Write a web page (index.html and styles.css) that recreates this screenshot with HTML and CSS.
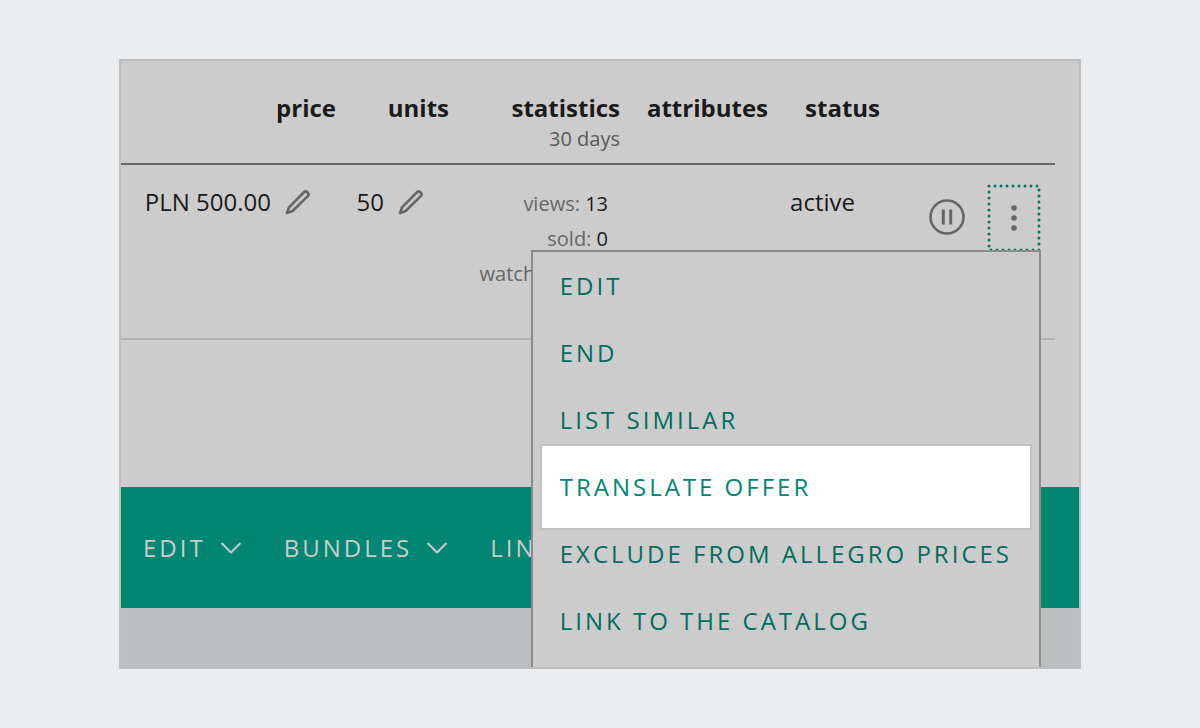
FILE: index.html
```
<!DOCTYPE html>
<html lang="en">
<head>
    <meta charset="UTF-8">
    <meta name="viewport" content="width=device-width, initial-scale=1.0">
    <title>My offers</title>
    <link rel="stylesheet" href="styles.css">
</head>
<body>
    <main class="panel">
        <table class="offers">
            <thead>
                <tr>
                    <th class="col-price">price</th>
                    <th class="col-units">units</th>
                    <th class="col-stats">statistics<small>30 days</small></th>
                    <th class="col-attributes">attributes</th>
                    <th class="col-status">status</th>
                    <th></th>
                </tr>
            </thead>
            <tbody>
                <tr>
                    <td>
                        <div class="value">
                            PLN 500.00
                            <button class="btn-icon" aria-label="Edit price">
                                <svg width="26" height="26" viewBox="0 0 26 26"><path d="M2 24 4 18.4 19.2 3Q20.6 1.6 22 3L23 4Q24.4 5.4 23 6.8L7.6 22Z"/></svg>
                            </button>
                        </div>
                    </td>
                    <td>
                        <div class="value">
                            50
                            <button class="btn-icon" aria-label="Edit units">
                                <svg width="26" height="26" viewBox="0 0 26 26"><path d="M2 24 4 18.4 19.2 3Q20.6 1.6 22 3L23 4Q24.4 5.4 23 6.8L7.6 22Z"/></svg>
                            </button>
                        </div>
                    </td>
                    <td>
                        <ul class="stats">
                            <li>views: <b>13</b></li>
                            <li>sold: <b>0</b></li>
                            <li>watched by: <b>0</b></li>
                        </ul>
                    </td>
                    <td></td>
                    <td><div class="value">active</div></td>
                    <td>
                        <div class="actions">
                            <button class="btn-icon" aria-label="Pause offer">
                                <svg width="36" height="36" viewBox="0 0 36 36"><circle cx="18" cy="18" r="16.5"/><path class="bars" d="M14.3 10.5v15M21.7 10.5v15"/></svg>
                            </button>
                            <div class="more">
                                <button class="btn-more" aria-label="More actions" aria-expanded="true">
                                    <svg width="54" height="67" viewBox="0 0 54 67">
                                        <rect class="ring" x="2" y="2" width="50" height="64"/>
                                        <circle class="dot" cx="27" cy="24" r="2.8"/>
                                        <circle class="dot" cx="27" cy="34" r="2.8"/>
                                        <circle class="dot" cx="27" cy="44" r="2.8"/>
                                    </svg>
                                </button>
                                <div class="menu">
                                    <a href="#">EDIT</a>
                                    <a href="#">END</a>
                                    <a href="#">LIST SIMILAR</a>
                                    <a href="#" class="highlight">TRANSLATE OFFER</a>
                                    <a href="#">EXCLUDE FROM ALLEGRO PRICES</a>
                                    <a href="#">LINK TO THE CATALOG</a>
                                </div>
                            </div>
                        </div>
                    </td>
                </tr>
            </tbody>
        </table>

        <div class="toolbar">
            <button>EDIT <svg width="22" height="14" viewBox="0 0 22 14"><path d="M1.5 2 11 11.5 20.5 2"/></svg></button>
            <button>BUNDLES <svg width="22" height="14" viewBox="0 0 22 14"><path d="M1.5 2 11 11.5 20.5 2"/></svg></button>
            <button>LINK</button>
        </div>
        <div class="bottom"></div>
    </main>
</body>
</html>
```

FILE: styles.css
```
* {
    box-sizing: border-box;
}
body {
    font-family: "Open Sans", sans-serif;
    font-size: 24px;
    line-height: 32px;
    color: #1a1a1a;
    background-color: #eaeef1;
    margin: 0;
    padding: 59px 119px;
}
button {
    font: inherit;
    color: inherit;
    background: none;
    border: none;
    padding: 0;
    cursor: pointer;
}
svg {
    display: block;
    fill: none;
    stroke: #666;
    stroke-width: 2.6;
    stroke-linejoin: round;
}
.panel {
    border: 2px solid #bfbfbf;
    background-color: #ccc;
    overflow: hidden;
}

/* Offer table */
.offers {
    width: calc(100% - 24px);
    table-layout: fixed;
    border-collapse: separate;
    border-spacing: 0;
    text-align: right;
    margin-bottom: 147px;
}
.offers th {
    height: 104px;
    padding: 31px 0 0;
    vertical-align: top;
    text-align: right;
    border-bottom: 2px solid #666;
}
.offers td {
    height: 175px;
    padding: 19px 0 0;
    vertical-align: top;
    border-bottom: 2px solid #b3b3b3;
}
.offers small {
    display: block;
    font-size: 20px;
    line-height: 30px;
    font-weight: 400;
    color: #595959;
}
.col-price {
    width: 215px;
}
.col-units {
    width: 113px;
}
.col-stats {
    width: 171px;
}
.col-attributes {
    width: 148px;
}
.col-status {
    width: 112px;
}
.value {
    display: flex;
    justify-content: flex-end;
    align-items: center;
    gap: 14px;
    height: 36px;
    padding-right: 25px;
    white-space: nowrap;
}
.stats {
    list-style: none;
    margin: 0;
    padding: 2px 12px 0 0;
    font-size: 20px;
    line-height: 35px;
    color: #666;
}
.stats b {
    font-weight: 400;
    color: #1a1a1a;
}
.actions {
    display: flex;
    justify-content: flex-end;
    align-items: center;
    gap: 22px;
    padding-right: 14px;
}
.actions .bars {
    stroke-width: 3;
}
.more {
    position: relative;
}
.btn-more {
    display: block;
    height: 66px;
}
.btn-more .ring {
    stroke: #00755f;
    stroke-width: 3;
    stroke-linecap: round;
    stroke-dasharray: 0 6;
}
.btn-more .dot {
    fill: #666;
    stroke: none;
}

/* Opened menu, runs past the bottom of the panel */
.menu {
    position: absolute;
    top: 100%;
    right: 0;
    z-index: 1;
    padding-bottom: 67px;
    border: 2px solid #8c8c8c;
    background-color: #ccc;
    text-align: left;
    white-space: nowrap;
}
.menu a {
    display: block;
    padding: 0 27px;
    line-height: 67px;
    letter-spacing: 3px;
    color: #006e5c;
    text-decoration: none;
}
.menu .highlight {
    position: relative;
    margin: -9px 7px -10px;
    padding: 7px 18px 8px;
    border: 2px solid #bfbfbf;
    background-color: #fff;
    color: #008673;
}

/* Green bar */
.toolbar {
    display: flex;
    align-items: center;
    gap: 42px;
    height: 121px;
    padding: 0 22px;
    background-color: #008673;
    color: #ccc;
}
.toolbar button {
    display: flex;
    align-items: center;
    gap: 14px;
    letter-spacing: 3px;
}
.toolbar svg {
    stroke: #ccc;
    stroke-width: 2;
}
.bottom {
    height: 59px;
    background-color: #bdbec0;
}
```
